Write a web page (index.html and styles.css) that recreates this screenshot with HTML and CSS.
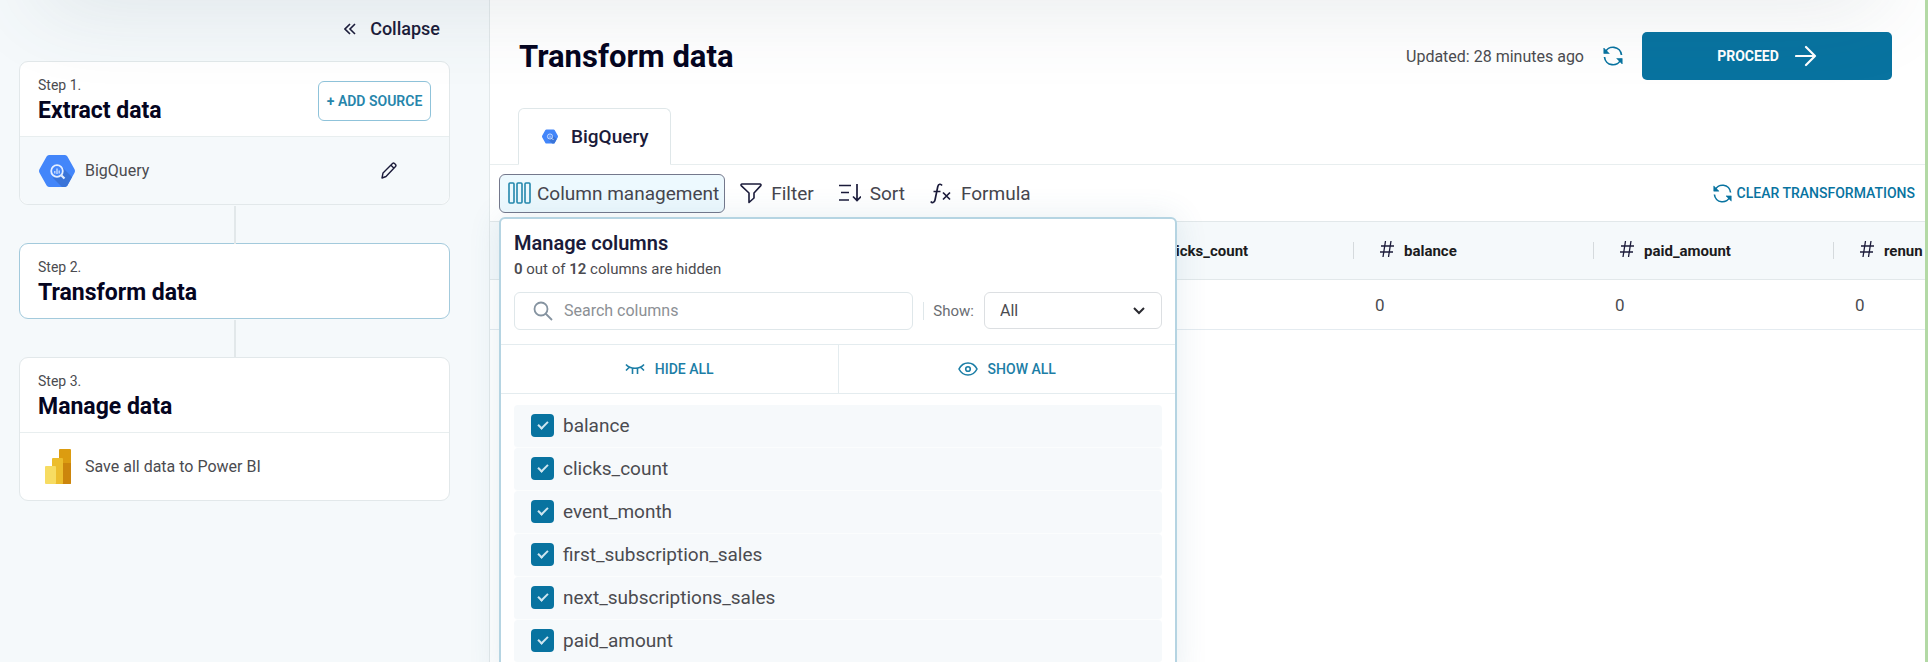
FILE: index.html
```html
<!DOCTYPE html>
<html lang="en">
<head>
  <meta charset="UTF-8">
  <meta name="viewport" content="width=device-width, initial-scale=1.0">
  <title>Transform data</title>
  <link rel="stylesheet" href="styles.css">
</head>
<body>
  <!-- shared icons -->
  <svg class="sprite" width="0" height="0">
    <symbol id="bigquery" viewBox="0 0 36 32">
      <path d="M10 0h16a3 3 0 0 1 2.400 1.400l7 12.600a4 4 0 0 1 0 4l-7 12.600A3 3 0 0 1 26 32H10a3 3 0 0 1-2.400-1.400l-7-12.600a4 4 0 0 1 0-4l7-12.600A3 3 0 0 1 10 0z" fill="#4386fa"/>
      <path d="M23 12l10 10-4.600 8.600A3 3 0 0 1 26 32h-3l-9-9z" fill="#3a74d8"/>
      <circle cx="18" cy="16" r="5.800" fill="#4386fa" stroke="#e4eeff" stroke-width="1.800"/>
      <path d="M22.500 20.500l3 3" stroke="#e4eeff" stroke-width="2.200"/>
      <path d="M15.800 16v2.500M18 13.500v5.500M20.200 15.500v3" stroke="#cfe0ff" stroke-width="1.300"/>
    </symbol>
    <symbol id="refresh" viewBox="0 0 20 20">
      <path d="M2 7A8.500 8.500 0 0 1 18.500 9M18 13A8.500 8.500 0 0 1 1.500 11" fill="none" stroke="currentColor" stroke-width="1.700"/>
      <path d="M.8 2v5.500h5.500zM19.200 18v-5.500h-5.500z" fill="currentColor" stroke="currentColor" stroke-width=".6"/>
    </symbol>
    <symbol id="hash" viewBox="0 0 14 16">
      <path d="M5.500 0L3 16M11 0L8.500 16M1 5h13M0 11h13" fill="none" stroke="currentColor" stroke-width="1.300"/>
    </symbol>
  </svg>

  <div class="layout">
    <aside class="sidebar">
      <button class="collapse" type="button">
        <svg width="12" height="12" viewBox="0 0 12 12"><path d="M6 1L1 6l5 5M11 1L6 6l5 5" fill="none" stroke="currentColor" stroke-width="1.600"/></svg>
        Collapse
      </button>

      <ol class="steps">
        <li class="step">
          <div class="step-head">
            <div>
              <p>Step 1.</p>
              <h2>Extract data</h2>
            </div>
            <button class="add" type="button">+ ADD SOURCE</button>
          </div>
          <div class="step-row tinted">
            <svg width="36" height="32"><use href="#bigquery"/></svg>
            <span>BigQuery</span>
            <button class="edit" type="button" aria-label="Edit">
              <svg width="16" height="17" viewBox="0 0 16 17"><path d="M1 16l1-5L11.500 1.500a1.500 1.500 0 0 1 2 0l1 1a1.500 1.500 0 0 1 0 2L5 14.500zM10 3.200l3 3" fill="none" stroke="currentColor" stroke-width="1.400" stroke-linejoin="round"/></svg>
            </button>
          </div>
        </li>
        <li class="step current">
          <div class="step-head">
            <div>
              <p>Step 2.</p>
              <h2>Transform data</h2>
            </div>
          </div>
        </li>
        <li class="step">
          <div class="step-head">
            <div>
              <p>Step 3.</p>
              <h2>Manage data</h2>
            </div>
          </div>
          <div class="step-row">
            <svg width="36" height="35" viewBox="0 0 36 35">
              <rect x="20" width="12" height="35" rx="1" fill="#dc9c10"/>
              <path d="M24 14h8v20a1 1 0 0 1-1 1h-7z" fill="#cc850c"/>
              <rect x="13" y="9" width="11" height="26" rx="1" fill="#ecbd2d"/>
              <rect x="6" y="17" width="11" height="18" rx="1" fill="#f7dc62"/>
            </svg>
            <span>Save all data to Power BI</span>
          </div>
        </li>
      </ol>
    </aside>

    <main class="main">
      <header class="top">
        <h1>Transform data</h1>
        <span class="updated">Updated: 28 minutes ago</span>
        <button class="reload" type="button" aria-label="Refresh"><svg width="20" height="20"><use href="#refresh"/></svg></button>
        <button class="proceed" type="button">
          PROCEED
          <svg width="22" height="22" viewBox="0 0 22 22"><path d="M1 11h19M11 2l9 9-9 9" fill="none" stroke="currentColor" stroke-width="2.200" stroke-linecap="round" stroke-linejoin="round"/></svg>
        </button>
      </header>

      <nav class="tabs">
        <a class="tab" href="#">
          <svg width="16" height="15"><use href="#bigquery"/></svg>
          BigQuery
        </a>
      </nav>

      <div class="toolbar">
        <div class="dropdown">
          <button class="tool open" type="button">
            <svg class="blue" width="23" height="22" viewBox="0 0 23 22"><path d="M2 1h3a1 1 0 0 1 1 1v18a1 1 0 0 1-1 1H2a1 1 0 0 1-1-1V2a1 1 0 0 1 1-1zM10 1h3a1 1 0 0 1 1 1v18a1 1 0 0 1-1 1h-3a1 1 0 0 1-1-1V2a1 1 0 0 1 1-1zM18 1h3a1 1 0 0 1 1 1v18a1 1 0 0 1-1 1h-3a1 1 0 0 1-1-1V2a1 1 0 0 1 1-1z" fill="none" stroke="currentColor" stroke-width="1.600"/></svg>
            Column management
          </button>

          <section class="panel">
            <div class="panel-head">
              <h3>Manage columns</h3>
              <p><b>0</b> out of <b>12</b> columns are hidden</p>
              <div class="filters">
                <div class="search">
                  <svg width="20" height="20" viewBox="0 0 20 20"><circle cx="8" cy="8" r="6.500" fill="none" stroke="currentColor" stroke-width="1.800"/><path d="M12.500 12.500L19 19" stroke="currentColor" stroke-width="1.800"/></svg>
                  <input type="text" placeholder="Search columns" aria-label="Search columns">
                </div>
                <label for="show">Show:</label>
                <div class="select">
                  <select id="show">
                    <option>All</option>
                  </select>
                  <svg width="12" height="8" viewBox="0 0 12 8"><path d="M1 1l5 5 5-5" fill="none" stroke="currentColor" stroke-width="2"/></svg>
                </div>
              </div>
            </div>
            <div class="bulk">
              <button type="button">
                <svg width="20" height="14" viewBox="0 0 20 14"><path d="M1 2.500c4 5 14 5 18 0M1 8.500l3-3M7.500 6.500V12M12.500 6.500V12M19 8.500l-3-3" fill="none" stroke="currentColor" stroke-width="1.600"/></svg>
                HIDE ALL
              </button>
              <button type="button">
                <svg width="20" height="14" viewBox="0 0 20 14"><path d="M1 7c4-8 14-8 18 0-4 8-14 8-18 0z" fill="none" stroke="currentColor" stroke-width="1.600"/><circle cx="10" cy="7" r="2.300" fill="none" stroke="currentColor" stroke-width="1.600"/></svg>
                SHOW ALL
              </button>
            </div>
            <div class="columns">
              <label><input type="checkbox" checked>balance</label>
              <label><input type="checkbox" checked>clicks_count</label>
              <label><input type="checkbox" checked>event_month</label>
              <label><input type="checkbox" checked>first_subscription_sales</label>
              <label><input type="checkbox" checked>next_subscriptions_sales</label>
              <label><input type="checkbox" checked>paid_amount</label>
            </div>
          </section>
        </div>
        <button class="tool" type="button">
          <svg width="22" height="21" viewBox="0 0 22 21"><path d="M2 1h18a1 1 0 0 1 .8 1.600L14 10v5l-5 4.500V10L1.200 2.600A1 1 0 0 1 2 1z" fill="none" stroke="currentColor" stroke-width="1.600" stroke-linejoin="round"/></svg>
          Filter
        </button>
        <button class="tool" type="button">
          <svg width="22" height="18" viewBox="0 0 22 18"><path d="M0 1.500h12M2 8.500h8M0 16h10M18 0v16M14 12.500l4 4 4-4" fill="none" stroke="currentColor" stroke-width="1.700"/></svg>
          Sort
        </button>
        <button class="tool" type="button">
          <svg width="22" height="21" viewBox="0 0 22 21"><path d="M12 2.500C11 .8 8.500.6 7.800 3.500L5 17c-.6 3-3 3.300-4.200 1.500M3.500 8.500h7M13 9.500l7 7M20 9.500l-7 7" fill="none" stroke="currentColor" stroke-width="1.700"/></svg>
          Formula
        </button>
        <button class="clear" type="button">
          <svg width="19" height="19"><use href="#refresh"/></svg>
          CLEAR TRANSFORMATIONS
        </button>
      </div>

      <div class="table-wrap">
        <table>
          <thead>
            <tr>
              <th class="lead"></th>
              <th><svg width="14" height="16"><use href="#hash"/></svg>clicks_count</th>
              <th><svg width="14" height="16"><use href="#hash"/></svg>balance</th>
              <th><svg width="14" height="16"><use href="#hash"/></svg>paid_amount</th>
              <th><svg width="14" height="16"><use href="#hash"/></svg>renun</th>
            </tr>
          </thead>
          <tbody>
            <tr>
              <td></td>
              <td></td>
              <td>0</td>
              <td>0</td>
              <td>0</td>
            </tr>
          </tbody>
        </table>
      </div>
    </main>
  </div>
</body>
</html>
```
FILE: styles.css
```css
* {
  margin: 0;
  padding: 0;
  box-sizing: border-box;
}

body {
  font-family: Roboto, "Liberation Sans", sans-serif;
  font-size: 16px;
  color: #4b4b50;
  background: #fff;
}

button {
  display: flex;
  align-items: center;
  border: none;
  background: none;
  font: inherit;
  color: inherit;
  cursor: pointer;
}

svg {
  flex: none;
}

.sprite {
  position: absolute;
}

.layout {
  display: flex;
  position: relative;
  height: 100vh;
  overflow: hidden;
  border-right: 3px solid #b3d9a5;
}

/* shadow of the app bar */
.layout::before {
  content: '';
  position: absolute;
  z-index: 5;
  top: -60px;
  left: 40px;
  right: 40px;
  height: 60px;
  box-shadow: 0 0 90px rgba(60, 85, 100, 0.16);
  pointer-events: none;
}

/* sidebar */
.sidebar {
  flex: none;
  width: 490px;
  padding: 16px 39px 0 19px;
  background: #f5f9fb;
  border-right: 1px solid #e2e8ea;
}

.collapse {
  gap: 14px;
  height: 25px;
  margin: 0 10px 20px auto;
  font-size: 18px;
  font-weight: 500;
  color: #1b1b3a;
}

.steps {
  display: flex;
  flex-direction: column;
  gap: 38px;
  list-style: none;
}

.step {
  position: relative;
  background: #fff;
  border: 1px solid #e2e8ea;
  border-radius: 9px;
}

.step + .step::before {
  content: '';
  position: absolute;
  bottom: 100%;
  left: 50%;
  height: 38px;
  margin-left: -1px;
  border-left: 2px solid #e2e8ea;
}

.current {
  border-color: #a3cadc;
}

.step-head {
  display: flex;
  align-items: center;
  justify-content: space-between;
  height: 74px;
  padding: 4px 18px 0;
}

.step-head p {
  font-size: 14px;
  line-height: 20px;
}

.step-head h2 {
  font-size: 23px;
  line-height: 32px;
  font-weight: 700;
  color: #05051f;
}

.add {
  justify-content: center;
  width: 113px;
  height: 40px;
  border: 1px solid #8fc3da;
  border-radius: 6px;
  font-size: 14px;
  font-weight: 600;
  color: #2585ab;
  white-space: nowrap;
}

.step-row {
  display: flex;
  align-items: center;
  gap: 10px;
  height: 68px;
  padding: 0 52px 0 19px;
  border-top: 1px solid #e8eeef;
}

.tinted {
  background: #f5f9fb;
  border-radius: 0 0 9px 9px;
}

.edit {
  margin-left: auto;
  color: #1b1b3a;
}

/* main */
.main {
  flex: 1;
  min-width: 0;
}

.top {
  display: flex;
  align-items: center;
  height: 108px;
  padding: 4px 33px 0 29px;
}

.top h1 {
  margin-right: auto;
  font-size: 31px;
  font-weight: 700;
  color: #05051f;
}

.reload {
  margin: 0 19px;
  color: #0873a0;
}

.proceed {
  justify-content: center;
  gap: 16px;
  width: 250px;
  height: 48px;
  border-radius: 5px;
  background: #0873a0;
  color: #fff;
  font-size: 14px;
  font-weight: 700;
}

.tabs {
  display: flex;
  height: 57px;
  padding-left: 28px;
  border-bottom: 1px solid #e8eeef;
}

.tab {
  display: flex;
  align-items: center;
  gap: 13px;
  height: 57px;
  padding: 0 21px 0 23px;
  border: 1px solid #dfe7e9;
  border-bottom-color: #fff;
  border-radius: 6px 6px 0 0;
  background: #fff;
  font-size: 19px;
  font-weight: 500;
  color: #1b1b3a;
  text-decoration: none;
}

.toolbar {
  display: flex;
  align-items: center;
  height: 56px;
  padding: 0 10px 0 9px;
}

.dropdown {
  position: relative;
}

.tool {
  gap: 9px;
  height: 39px;
  margin-right: 25px;
  font-size: 19px;
  color: #46464e;
  white-space: nowrap;
}

.tool svg {
  color: #1b1b3a;
}

.open {
  gap: 6px;
  margin-right: 15px;
  padding: 0 5px 0 8px;
  border: 1px solid #74788c;
  border-radius: 6px;
  background: #edf9fe;
}

.tool .blue {
  color: #2488ad;
}

.clear {
  gap: 5px;
  margin-left: auto;
  font-size: 14px;
  font-weight: 500;
  color: #0873a0;
}

/* column management panel */
.panel {
  position: absolute;
  z-index: 2;
  top: 43px;
  left: 0;
  width: 678px;
  padding-bottom: 16px;
  border: 2px solid #b5d4e2;
  border-radius: 6px;
  background: #fff;
  box-shadow: 0 0 32px rgba(50, 110, 140, 0.12);
}

.panel-head {
  padding: 10px 13px 14px;
}

.panel-head h3 {
  font-size: 20px;
  line-height: 28px;
  font-weight: 600;
  color: #1b1b3a;
}

.panel-head p {
  margin-bottom: 11px;
  font-size: 15px;
  line-height: 24px;
}

.panel-head b {
  font-weight: 600;
}

.filters {
  display: flex;
  align-items: center;
  font-size: 16px;
}

.search {
  display: flex;
  flex: 1;
  align-items: center;
  gap: 11px;
  height: 38px;
  margin-right: 10px;
  padding: 0 18px;
  border: 1px solid #dfe7ea;
  border-radius: 6px;
  color: #8593a0;
}

.search input {
  flex: 1;
  min-width: 0;
  border: none;
  outline: none;
  background: none;
  font: inherit;
}

.search input::placeholder {
  color: #8c9095;
}

.filters label {
  margin-right: 10px;
  padding-left: 9px;
  border-left: 1px solid #dfe7ea;
  font-size: 15px;
  color: #6a6d72;
}

.select {
  position: relative;
  width: 178px;
}

.select select {
  width: 100%;
  height: 37px;
  padding: 0 15px;
  border: 1px solid #dcdfe2;
  border-radius: 6px;
  appearance: none;
  background: #fff;
  font: inherit;
  color: #4b4b50;
}

.select svg {
  position: absolute;
  top: 15px;
  right: 17px;
  color: #2a2a30;
  pointer-events: none;
}

.bulk {
  display: flex;
  border-top: 1px solid #e4ecef;
  border-bottom: 1px solid #e4ecef;
}

.bulk button {
  flex: 1;
  justify-content: center;
  gap: 10px;
  height: 48px;
  font-size: 14px;
  font-weight: 500;
  color: #1c7ea6;
}

.bulk button + button {
  border-left: 1px solid #e4ecef;
}

.columns {
  padding: 11px 13px 0;
}

.columns label {
  display: flex;
  align-items: center;
  gap: 9px;
  height: 43px;
  padding-left: 17px;
  border-bottom: 1px solid #fbfdfd;
  border-radius: 4px;
  background: #f6f9fb;
  font-size: 19px;
}

.columns input {
  display: flex;
  align-items: center;
  justify-content: center;
  width: 23px;
  height: 23px;
  border-radius: 4px;
  appearance: none;
  background: #0873a0;
}

.columns input:checked::after {
  content: '';
  width: 8px;
  height: 4px;
  margin-bottom: 3px;
  border-left: 2px solid #cfe6f0;
  border-bottom: 2px solid #cfe6f0;
  transform: rotate(-45deg);
}

/* data table */
.table-wrap {
  overflow: hidden;
}

table {
  width: 1583px;
  table-layout: fixed;
  border-collapse: collapse;
}

th {
  position: relative;
  width: 240px;
  height: 58px;
  padding-left: 27px;
  border-top: 1px solid #e2e8ea;
  border-bottom: 1px solid #e2e8ea;
  background: #f5f9fb;
  font-size: 15px;
  font-weight: 700;
  color: #1b1b20;
  text-align: left;
}

th + th::before {
  content: '';
  position: absolute;
  top: 20px;
  left: 0;
  height: 17px;
  border-left: 1px solid #d5dadd;
}

th svg {
  margin-right: 10px;
  vertical-align: -1px;
  color: #1b1b3a;
}

.lead {
  width: 623px;
}

td {
  height: 50px;
  padding-left: 22px;
  border-bottom: 1px solid #e4ebf0;
  font-size: 17px;
}
```
